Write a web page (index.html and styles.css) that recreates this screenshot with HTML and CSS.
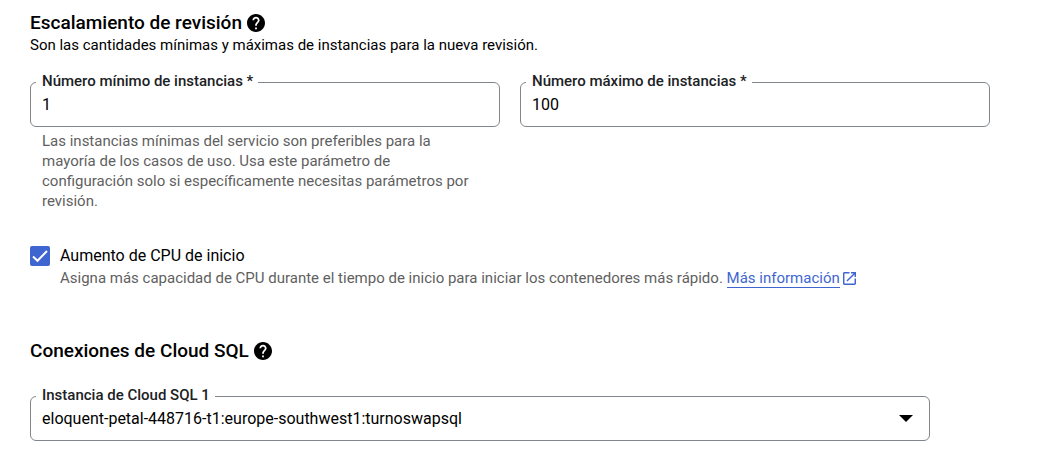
FILE: index.html
```html
<!DOCTYPE html>
<html lang="es">
<head>
<meta charset="utf-8">
<meta name="viewport" content="width=device-width, initial-scale=1">
<title>Escalamiento de revisión</title>
<link rel="stylesheet" href="styles.css">
</head>
<body>
<form class="settings">
  <section class="section">
    <h2 class="title">Escalamiento de revisión
      <button class="help" type="button" aria-label="Ayuda sobre escalamiento"><svg viewBox="2 2 20 20" aria-hidden="true"><path d="M12 2C6.48 2 2 6.48 2 12s4.48 10 10 10 10-4.48 10-10S17.52 2 12 2zm1 17h-2v-2h2v2zm2.07-7.75l-.9.92C13.45 12.9 13 13.5 13 15h-2v-.5c0-1.1.45-2.1 1.17-2.83l1.24-1.26c.37-.36.59-.86.59-1.41 0-1.1-.9-2-2-2s-2 .9-2 2H8c0-2.21 1.79-4 4-4s4 1.79 4 4c0 .88-.36 1.68-.93 2.25z"/></svg></button>
    </h2>
    <p class="subtitle">Son las cantidades mínimas y máximas de instancias para la nueva revisión.</p>
    <div class="fields">
      <div>
        <div class="field">
          <label class="field-label" for="min">Número mínimo de instancias *</label>
          <input class="control" id="min" type="text" inputmode="numeric" value="1" aria-describedby="min-hint">
        </div>
        <p class="hint" id="min-hint">Las instancias mínimas del servicio son preferibles para la mayoría de los casos de uso. Usa este parámetro de configuración solo si específicamente necesitas parámetros por revisión.</p>
      </div>
      <div class="field">
        <label class="field-label" for="max">Número máximo de instancias *</label>
        <input class="control" id="max" type="text" inputmode="numeric" value="100">
      </div>
    </div>
  </section>

  <section class="option">
    <input class="checkbox" id="boost" type="checkbox" checked>
    <svg class="tick" viewBox="0 0 20 20" aria-hidden="true"><path d="M3 10.500L7.500 14.800L17 5"/></svg>
    <div class="option-text">
      <label class="option-label" for="boost">Aumento de CPU de inicio</label>
      <p class="description">Asigna más capacidad de CPU durante el tiempo de inicio para iniciar los contenedores más rápido. <a class="link" href="#info"><span class="link-text">Más información</span><svg class="external" viewBox="3 3 18 18" aria-hidden="true"><path d="M19 19H5V5h7V3H5c-1.110 0-2 .9-2 2v14c0 1.100.89 2 2 2h14c1.100 0 2-.9 2-2v-7h-2v7zM14 3v2h3.590l-9.830 9.830 1.410 1.410L19 6.410V10h2V3h-7z"/></svg></a></p>
    </div>
  </section>

  <section class="section">
    <h2 class="title">Conexiones de Cloud SQL
      <button class="help" type="button" aria-label="Ayuda sobre Cloud SQL"><svg viewBox="2 2 20 20" aria-hidden="true"><path d="M12 2C6.48 2 2 6.48 2 12s4.48 10 10 10 10-4.48 10-10S17.52 2 12 2zm1 17h-2v-2h2v2zm2.07-7.75l-.9.92C13.45 12.9 13 13.5 13 15h-2v-.5c0-1.1.45-2.1 1.17-2.83l1.24-1.26c.37-.36.59-.86.59-1.41 0-1.1-.9-2-2-2s-2 .9-2 2H8c0-2.21 1.79-4 4-4s4 1.79 4 4c0 .88-.36 1.68-.93 2.25z"/></svg></button>
    </h2>
    <div class="field connection">
      <label class="field-label" for="sql">Instancia de Cloud SQL 1</label>
      <select class="control" id="sql">
        <option>eloquent-petal-448716-t1:europe-southwest1:turnoswapsql</option>
      </select>
      <svg class="arrow" viewBox="0 0 14 7" aria-hidden="true"><path d="M0 0h14L7 7z"/></svg>
    </div>
  </section>
</form>
</body>
</html>
```
FILE: styles.css
```css
* {
  box-sizing: border-box;
}

body {
  margin: 0;
  background: #fff;
  color: #000;
  font-family: Roboto, "Liberation Sans", sans-serif;
}

h2,
p {
  margin: 0;
}

.settings {
  display: flex;
  flex-direction: column;
  padding: 11px 58px 20px 30px;
}

.title {
  display: flex;
  align-items: center;
  gap: 5px;
  font-size: 19px;
  line-height: 24px;
  font-weight: 500;
}

.help {
  display: flex;
  padding: 0;
  border: 0;
  background: none;
}

.help svg {
  width: 18px;
  height: 18px;
}

.subtitle {
  font-size: 15px;
  line-height: 20px;
}

.fields {
  display: grid;
  grid-template-columns: 1fr 1fr;
  gap: 20px;
  margin-top: 27px;
}

.field {
  position: relative;
}

.field-label {
  position: absolute;
  top: -11px;
  left: 6px;
  padding: 0 5px 0 6px;
  background: #fff;
  color: #202124;
  font-size: 15px;
  line-height: 20px;
  font-weight: 500;
}

.control {
  display: block;
  width: 100%;
  height: 45px;
  padding: 0 11px;
  border: 1px solid #80868b;
  border-radius: 6px;
  background: #fff;
  color: #000;
  font: 16px/20px Roboto, "Liberation Sans", sans-serif;
  appearance: none;
}

.hint {
  padding: 4px 20px 0 12px;
  color: #5f5f5f;
  font-size: 15px;
  line-height: 20px;
}

.option {
  position: relative;
  display: flex;
  gap: 10px;
  margin-top: 35px;
}

.checkbox {
  flex: none;
  width: 20px;
  height: 20px;
  margin: 0;
  border-radius: 2px;
  background: #3f66d0;
  appearance: none;
}

.tick {
  position: absolute;
  top: 0;
  left: 0;
  width: 20px;
  height: 20px;
  fill: none;
  stroke: #fff;
  stroke-width: 2;
  pointer-events: none;
}

.option-label {
  display: block;
  font-size: 16px;
  line-height: 20px;
}

.description {
  margin-top: 2px;
  color: #5f5f5f;
  font-size: 15px;
  line-height: 20px;
}

.link {
  color: #3f66d0;
  text-decoration: none;
}

.link-text {
  border-bottom: 1px solid #3f66d0;
}

.external {
  width: 13px;
  height: 13px;
  margin-left: 3px;
  vertical-align: -2px;
  fill: #3f66d0;
}

.option + .section {
  margin-top: 51px;
}

.connection {
  margin: 33px 60px 0 0;
}

.arrow {
  position: absolute;
  top: 19px;
  right: 17px;
  width: 14px;
  height: 7px;
  pointer-events: none;
}
```
